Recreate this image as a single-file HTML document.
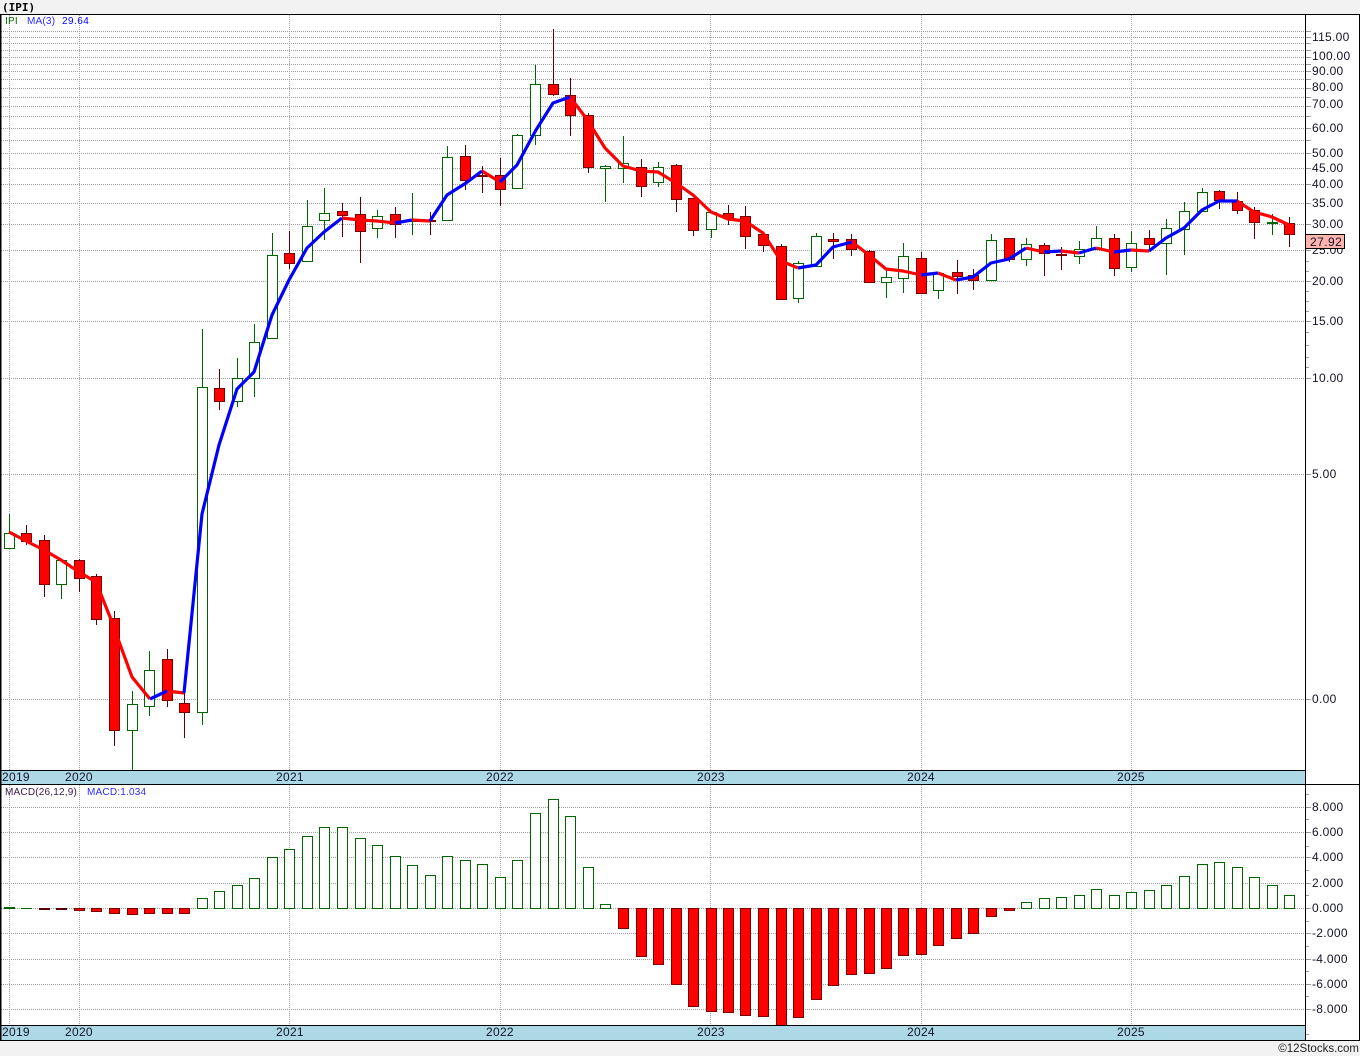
<!DOCTYPE html>
<html>
<head>
<meta charset="utf-8">
<title>(IPI)</title>
<style>
html,body{margin:0;padding:0;background:#f2f2f2;width:1360px;height:1056px;overflow:hidden}
svg{position:absolute;left:0;top:0;display:block}
text{font-family:"Liberation Sans",sans-serif;font-size:12px;fill:#14142a;letter-spacing:.3px}
.s{font-size:10px;letter-spacing:.2px}
</style>
</head>
<body>
<svg width="1360" height="1056" viewBox="0 0 1360 1056" xmlns="http://www.w3.org/2000/svg">
<rect x="0" y="0" width="1360" height="1056" fill="#f2f2f2"/>
<rect x="1" y="15" width="1358" height="1025" fill="#fff"/>
<text x="2" y="11" style="font-family:'DejaVu Sans Mono',monospace;font-weight:bold;font-size:11px;fill:#000;letter-spacing:0">(IPI)</text>

<!-- grid -->
<g stroke="#a0a0a0" stroke-width="1" stroke-dasharray="1 1" fill="none">
<path d="M1 31.5H1305M1 37.5H1305M1 43.5H1305M1 50.5H1305M1 57.5H1305M1 64.5H1305M1 71.5H1305M1 79.5H1305M1 88.5H1305M1 97.5H1305M1 106.5H1305M1 116.5H1305M1 128.5H1305M1 140.5H1305M1 153.5H1305M1 168.5H1305M1 184.5H1305M1 203.5H1305M1 224.5H1305M1 250.5H1305M1 281.5H1305M1 321.5H1305M1 378.5H1305M1 474.5H1305M1 699.5H1305"/>
<path d="M1 807.5H1305M1 832.5H1305M1 857.5H1305M1 883.5H1305M1 908.5H1305M1 933.5H1305M1 959.5H1305M1 984.5H1305M1 1009.5H1305"/>
<path d="M9.5 15V770M79.5 15V770M289.5 15V770M500.5 15V770M710.5 15V770M921.5 15V770M1131.5 15V770M9.5 785V1025M79.5 785V1025M289.5 785V1025M500.5 785V1025M710.5 785V1025M921.5 785V1025M1131.5 785V1025"/>
</g>
<!-- axis ticks -->
<path stroke="#999" stroke-width="1" fill="none" d="M1305 31.5h6M1305 37.5h6M1305 43.5h6M1305 50.5h6M1305 57.5h6M1305 64.5h6M1305 71.5h6M1305 79.5h6M1305 88.5h6M1305 97.5h6M1305 106.5h6M1305 116.5h6M1305 128.5h6M1305 140.5h6M1305 153.5h6M1305 168.5h6M1305 184.5h6M1305 203.5h6M1305 224.5h6M1305 250.5h6M1305 261.5h4M1305 271.5h4M1305 281.5h6M1305 291.5h4M1305 301.5h4M1305 311.5h4M1305 321.5h6M1305 332.5h4M1305 345.5h4M1305 357.5h4M1305 367.5h4M1305 378.5h6M1305 474.5h6M1305 699.5h6M1305 794.5h4M1305 807.5h6M1305 819.5h4M1305 832.5h6M1305 846.5h4M1305 857.5h6M1305 870.5h4M1305 883.5h6M1305 895.5h4M1305 908.5h6M1305 921.5h4M1305 933.5h6M1305 946.5h4M1305 959.5h6M1305 971.5h4M1305 984.5h6M1305 996.5h4M1305 1009.5h6M1305 1034.5h4"/>

<!-- wicks -->
<path stroke="#006400" stroke-width="1" fill="none" d="M9.5 514V548M61.5 560V599M132.5 691V770M149.5 651V716M202.5 329V725M237.5 358V407M254.5 324V397M272.5 233V338M307.5 200V261M324.5 188V240M377.5 210V238M412.5 193V235M447.5 146V221M517.5 134V188M535.5 65V145M605.5 165V202M623.5 136V183M658.5 162V187M711.5 212V238M798.5 261V303M816.5 233V266M886.5 270V298M903.5 243V293M938.5 273V299M991.5 234V281M1026.5 238V266M1079.5 241V264M1096.5 226V249M1131.5 231V272M1166.5 219V275M1184.5 202V255M1202.5 188V212M1272.5 214V235"/>
<path stroke="#5c0008" stroke-width="1" fill="none" d="M26.5 525V545M44.5 535V597M79.5 559V592M96.5 574V625M114.5 611V746M167.5 649V707M184.5 693V738M219.5 369V410M289.5 231V269M342.5 203V237M360.5 197V263M395.5 207V238M430.5 212V235M465.5 145V190M482.5 166V193M500.5 158V206M553.5 29V96M570.5 78V136M588.5 113V173M641.5 159V197M676.5 164V212M693.5 198V236M728.5 205V225M745.5 206V249M763.5 234V252M781.5 244V299M833.5 233V259M851.5 234V256M869.5 250V282M921.5 252V293M957.5 260V294M973.5 269V290M1009.5 238V262M1044.5 243V276M1061.5 247V270M1114.5 234V276M1149.5 230V250M1219.5 190V209M1237.5 192V214M1254.5 207V239M1289.5 217V247"/>

<!-- up boxes -->
<path stroke="#006400" stroke-width="1" fill="#fff" d="M4.5 533.5h10v15h-10zM56.5 560.5h10v24h-10zM127.5 704.5h10v26h-10zM144.5 670.5h10v36h-10zM197.5 387.5h10v325h-10zM232.5 378.5h10v23h-10zM249.5 342.5h10v36h-10zM267.5 255.5h10v83h-10zM302.5 226.5h10v35h-10zM319.5 213.5h10v7h-10zM372.5 216.5h10v12h-10zM407.5 220.5h10v1h-10zM442.5 157.5h10v63h-10zM512.5 135.5h10v53h-10zM530.5 84.5h10v51h-10zM600.5 166.5h10v2h-10zM618.5 163.5h10v5h-10zM653.5 167.5h10v15h-10zM706.5 212.5h10v17h-10zM793.5 263.5h10v35h-10zM811.5 236.5h10v30h-10zM881.5 277.5h10v5h-10zM898.5 256.5h10v22h-10zM933.5 273.5h10v17h-10zM986.5 240.5h10v40h-10zM1021.5 244.5h10v15h-10zM1074.5 249.5h10v7h-10zM1091.5 238.5h10v11h-10zM1126.5 243.5h10v24h-10zM1161.5 228.5h10v15h-10zM1179.5 211.5h10v18h-10zM1197.5 192.5h10v19h-10zM1267.5 222.5h10v1h-10z"/>
<!-- down boxes -->
<path stroke="#7a0000" stroke-width="1" fill="#ff0000" d="M21.5 533.5h10v8h-10zM39.5 540.5h10v44h-10zM74.5 560.5h10v18h-10zM91.5 576.5h10v43h-10zM109.5 618.5h10v112h-10zM162.5 659.5h10v41h-10zM179.5 703.5h10v9h-10zM214.5 388.5h10v13h-10zM284.5 253.5h10v10h-10zM337.5 211.5h10v4h-10zM355.5 214.5h10v17h-10zM390.5 214.5h10v10h-10zM425.5 220.5h10v1h-10zM460.5 156.5h10v24h-10zM477.5 175.5h10v1h-10zM495.5 175.5h10v14h-10zM548.5 84.5h10v10h-10zM565.5 95.5h10v20h-10zM583.5 115.5h10v52h-10zM636.5 167.5h10v19h-10zM671.5 165.5h10v34h-10zM688.5 198.5h10v32h-10zM723.5 213.5h10v5h-10zM740.5 216.5h10v20h-10zM758.5 234.5h10v11h-10zM776.5 246.5h10v53h-10zM828.5 239.5h10v2h-10zM846.5 239.5h10v10h-10zM864.5 251.5h10v31h-10zM916.5 258.5h10v35h-10zM952.5 272.5h10v4h-10zM968.5 275.5h10v5h-10zM1004.5 238.5h10v21h-10zM1039.5 245.5h10v8h-10zM1056.5 254.5h10v1h-10zM1109.5 238.5h10v30h-10zM1144.5 238.5h10v6h-10zM1214.5 191.5h10v9h-10zM1232.5 201.5h10v9h-10zM1249.5 210.5h10v12h-10zM1284.5 223.5h10v11h-10z"/>

<!-- MA -->
<g fill="none" stroke-width="3.2" stroke-linejoin="round" stroke-linecap="butt">
<g stroke="#ff0000">
<polyline points="9,532 26,541 44,550 61,560 79,572 96,582 110,617 132,677 150,699"/>
<polyline points="167,691 184,693"/>
<polyline points="342,218 360,220 377,221 395,223"/>
<polyline points="412,220 430,221"/>
<polyline points="482,171 500,182"/>
<polyline points="570,97 586,118 605,148 623,166 641,171 658,172 676,183 693,195 711,212 728,219 745,221 763,233 781,261 798,268"/>
<polyline points="852,242 869,255 886,269 903,271 921,275"/>
<polyline points="938,273 956,280"/>
<polyline points="1026,248 1044,252"/>
<polyline points="1061,251 1079,253"/>
<polyline points="1096,248 1114,252"/>
<polyline points="1131,250 1149,251"/>
<polyline points="1237,201 1254,212 1272,217 1289,225"/>
</g>
<g stroke="#0000ff">
<polyline points="150,699 167,691"/>
<polyline points="184,693 202,514 219,445 237,389 254,372 272,315 289,280 307,248 324,232 342,218"/>
<polyline points="395,223 412,220"/>
<polyline points="430,221 447,195 466,183 482,171"/>
<polyline points="500,182 517,165 536,130 553,103 570,97"/>
<polyline points="798,268 816,265 833,247 852,242"/>
<polyline points="921,275 938,273"/>
<polyline points="956,280 973,277 991,263 1009,259 1026,248"/>
<polyline points="1044,252 1061,251"/>
<polyline points="1079,253 1096,248"/>
<polyline points="1114,252 1131,250"/>
<polyline points="1149,251 1166,238 1184,228 1202,210 1219,201 1237,201"/>
</g>
</g>

<!-- MACD bars up -->
<path stroke="#006400" stroke-width="1" fill="#fff" d="M197.5 898.5h10v10h-10zM214.5 891.5h10v17h-10zM232.5 885.5h10v23h-10zM249.5 878.5h10v30h-10zM267.5 857.5h10v51h-10zM284.5 849.5h10v59h-10zM302.5 836.5h10v72h-10zM319.5 827.5h10v81h-10zM337.5 827.5h10v81h-10zM355.5 838.5h10v70h-10zM372.5 845.5h10v63h-10zM390.5 856.5h10v52h-10zM407.5 865.5h10v43h-10zM425.5 875.5h10v33h-10zM442.5 856.5h10v52h-10zM460.5 860.5h10v48h-10zM477.5 864.5h10v44h-10zM495.5 877.5h10v31h-10zM512.5 860.5h10v48h-10zM530.5 813.5h10v95h-10zM548.5 799.5h10v109h-10zM565.5 816.5h10v92h-10zM583.5 867.5h10v41h-10zM600.5 904.5h10v4h-10zM1021.5 902.5h10v6h-10zM1039.5 898.5h10v10h-10zM1056.5 897.5h10v11h-10zM1074.5 895.5h10v13h-10zM1091.5 889.5h10v19h-10zM1109.5 895.5h10v13h-10zM1126.5 892.5h10v16h-10zM1144.5 890.5h10v18h-10zM1161.5 885.5h10v23h-10zM1179.5 876.5h10v32h-10zM1197.5 864.5h10v44h-10zM1214.5 862.5h10v46h-10zM1232.5 867.5h10v41h-10zM1249.5 877.5h10v31h-10zM1267.5 885.5h10v23h-10zM1284.5 895.5h10v13h-10z"/>
<rect x="4" y="907" width="11" height="2" fill="#006400"/>
<rect x="21" y="908" width="11" height="1" fill="#006400"/>
<!-- MACD bars down -->
<rect x="39" y="908" width="11" height="2" fill="#5c0008"/>
<rect x="56" y="908" width="11" height="2" fill="#5c0008"/>
<path stroke="#7a0000" stroke-width="1" fill="#ff0000" d="M74.5 908.5h10v2h-10zM91.5 908.5h10v3h-10zM109.5 908.5h10v5h-10zM127.5 908.5h10v6h-10zM144.5 908.5h10v5h-10zM162.5 908.5h10v5h-10zM179.5 908.5h10v5h-10zM618.5 908.5h10v20h-10zM636.5 908.5h10v48h-10zM653.5 908.5h10v56h-10zM671.5 908.5h10v76h-10zM688.5 908.5h10v98h-10zM706.5 908.5h10v103h-10zM723.5 908.5h10v104h-10zM740.5 908.5h10v107h-10zM758.5 908.5h10v108h-10zM776.5 908.5h10v117h-10zM793.5 908.5h10v109h-10zM811.5 908.5h10v91h-10zM828.5 908.5h10v77h-10zM846.5 908.5h10v66h-10zM864.5 908.5h10v65h-10zM881.5 908.5h10v60h-10zM898.5 908.5h10v47h-10zM916.5 908.5h10v46h-10zM933.5 908.5h10v37h-10zM951.5 908.5h10v30h-10zM968.5 908.5h10v25h-10zM986.5 908.5h10v8h-10zM1004.5 908.5h10v2h-10z"/>

<!-- date bars -->
<rect x="1" y="771" width="1304" height="13" fill="#add8e6"/>
<rect x="1" y="1026" width="1304" height="14" fill="#add8e6"/>

<!-- frame -->
<g stroke="#000" stroke-width="1" fill="none">
<path d="M0 14.5H1360M0.5 14V1040M1305.5 14V1040M1359.5 14V1040M0 1040.5H1360"/>
<path d="M0 770.5H1305M0 784.5H1360M0 1025.5H1305"/>
<path d="M1 14V1040"/>
</g>

<!-- labels -->
<text class="s" x="5" y="24" style="fill:#006400">IPI</text>
<text class="s" x="27" y="24" style="fill:#2a2aff">MA(3)</text>
<text class="s" x="62" y="24" style="fill:#0000ff;letter-spacing:.45px">29.64</text>
<text class="s" x="5" y="795" style="fill:#3a1a4a">MACD(26,12,9)</text>
<text class="s" x="87" y="795" style="fill:#2a2aff">MACD:1.034</text>

<g>
<text x="2" y="781">2019</text><text x="65" y="781">2020</text><text x="276" y="781">2021</text><text x="486" y="781">2022</text><text x="697" y="781">2023</text><text x="907" y="781">2024</text><text x="1117" y="781">2025</text>
<text x="2" y="1036">2019</text><text x="65" y="1036">2020</text><text x="276" y="1036">2021</text><text x="486" y="1036">2022</text><text x="697" y="1036">2023</text><text x="907" y="1036">2024</text><text x="1117" y="1036">2025</text>
</g>

<g>
<text x="1312" y="41">115.00</text>
<text x="1312" y="60">100.00</text>
<text x="1312" y="75">90.00</text>
<text x="1312" y="91">80.00</text>
<text x="1312" y="108">70.00</text>
<text x="1312" y="132">60.00</text>
<text x="1312" y="157">50.00</text>
<text x="1312" y="172">45.00</text>
<text x="1312" y="188">40.00</text>
<text x="1312" y="207">35.00</text>
<text x="1312" y="228">30.00</text>
<text x="1312" y="254">25.00</text>
<text x="1312" y="285">20.00</text>
<text x="1312" y="325">15.00</text>
<text x="1312" y="382">10.00</text>
<text x="1312" y="478">5.00</text>
<text x="1312" y="703">0.00</text>
<text x="1312" y="811">8.000</text>
<text x="1312" y="836">6.000</text>
<text x="1312" y="861">4.000</text>
<text x="1312" y="887">2.000</text>
<text x="1312" y="912">0.000</text>
<text x="1312" y="937">-2.000</text>
<text x="1312" y="963">-4.000</text>
<text x="1312" y="988">-6.000</text>
<text x="1312" y="1013">-8.000</text>
</g>

<!-- price tag -->
<rect x="1305.5" y="234.5" width="39" height="14" fill="#ffb4ac" stroke="#000" stroke-width="1"/>
<text x="1310" y="246" style="letter-spacing:.45px">27.92</text>

<!-- footer -->
<text x="1359" y="1052" text-anchor="end" style="fill:#222;letter-spacing:0;font-size:11.5px">©12Stocks.com</text>
</svg>
</body>
</html>
